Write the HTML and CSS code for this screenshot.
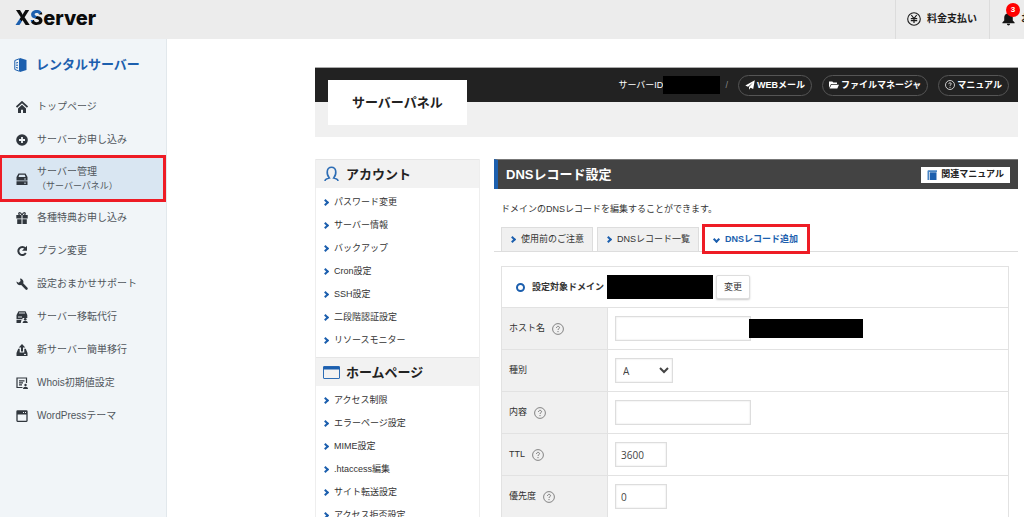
FILE: index.html
```html
<!DOCTYPE html>
<html lang="ja">
<head>
<meta charset="utf-8">
<title>サーバーパネル - DNSレコード設定</title>
<link rel="stylesheet" href="styles.css">
</head>
<body>
<svg class="sprite" aria-hidden="true">
  <symbol id="help" viewBox="0 0 12 12"><circle cx="6" cy="6" r="5.4" fill="none" stroke="currentColor" stroke-width=".9"/><path d="M4.5 4.9c0-2 3-2 3-.2C7.500 5.800 6 5.700 6 7" fill="none" stroke="currentColor" stroke-width="1"/><circle cx="6" cy="8.600" r=".65" fill="currentColor"/></symbol>
</svg>
<header class="topbar">
  <a class="logo" href="#" aria-label="XServer"><span class="logo-x">X</span><span class="logo-s">S</span>erver</a>
  <nav class="topnav">
    <a class="topnav-item" href="#">
      <svg class="icon-yen" viewBox="0 0 14 14" fill="none" stroke="#1c1c1c"><circle cx="7" cy="7" r="6.300" stroke-width="1.100"/><path d="M4.300 3L7 6.500 9.700 3M3.800 6.700h6.400M3.800 8.700h6.400M7 6.500V11" stroke-width="1.200"/></svg>
      料金支払い
    </a>
    <a class="topnav-item notice" href="#">
      <span class="bell"><svg viewBox="0 0 14 14" fill="#151515"><path d="M7 0c.8 0 1.200.5 1.200 1.200C10.600 1.700 11.600 3.500 11.600 5.500v3l2 2.200v.8H.4v-.8l2-2.200v-3c0-2 1-3.800 3.400-4.300C5.800.5 6.200 0 7 0zM5.300 12.200h3.400c0 2.300-3.400 2.300-3.400 0z"/></svg><span class="badge">3</span></span>
      お知らせ
    </a>
  </nav>
</header>
<div class="shell">
  <aside class="sidebar">
    <h2 class="side-title"><svg viewBox="0 0 13 14"><path d="M6 0l6.500 2v10L6 14z" fill="#1c5fae"/><path d="M5.500.7L.8 2.500v9l4.700 1.800zM2 5l2-.5M2 7.200h2M2 9.500l2 .5" fill="none" stroke="#1c5fae"/></svg>レンタルサーバー</h2>
    <ul class="side-list">
      <li><a href="#"><svg viewBox="0 0 12 12"><path d="M.5 6L6 1l5.500 5" fill="none" stroke="currentColor" stroke-width="1.700"/><path d="M6 3.800l4 3.600V12H7V8.700H5V12H2V7.400z"/></svg><span>トップページ</span></a></li>
      <li><a href="#"><svg viewBox="0 0 12 12"><circle cx="6" cy="6" r="5.800"/><path d="M6 3v6M3 6h6" stroke="#f1f5f8" stroke-width="1.800"/></svg><span>サーバーお申し込み</span></a></li>
      <li class="current"><a href="#"><svg viewBox="0 0 12 12"><path d="M2.500.5h7L11.500 4v3.500H.5V4zM.5 8.300h11V12H.5z"/><path d="M3.300 1.700h5.400l.8 2.300h-7z" fill="#d9e6f2"/><path d="M8 6h2M8 10.200h2" stroke="#d9e6f2" stroke-width=".8"/></svg><span>サーバー管理<small>（サーバーパネル）</small></span></a></li>
      <li><a href="#"><svg viewBox="0 0 12 12"><path d="M.3 3h5.200v3.500H.3zM6.500 3h5.200v3.500H6.500zM1.200 7.200h4.300V12H1.200zM6.500 7.200h4.300V12H6.500z"/><path d="M6 3C4-1 1.500 1 3.500 3M6 3c2-4 4.500-2 2.500 0" fill="none" stroke="currentColor" stroke-width="1.300"/></svg><span>各種特典お申し込み</span></a></li>
      <li><a href="#"><svg viewBox="0 0 12 12"><path d="M9.300 3.300A4 4 0 1 0 9.800 8" fill="none" stroke="currentColor" stroke-width="2"/><path d="M11 .8v5H6z"/></svg><span>プラン変更</span></a></li>
      <li><a href="#"><svg viewBox="0 0 12 12"><path d="M4 .4c2.800.2 4 2.600 3.200 4.800l4.300 4.600c1 1.300-.8 2.800-1.900 1.700L5.200 7C3 7.600.6 6.300.4 3.500l2.300 1.300 1.900-1.700z"/></svg><span>設定おまかせサポート</span></a></li>
      <li><a href="#"><svg viewBox="0 0 12 12"><path d="M2.500.3h7L11.300 4v3H6.500v1.200h-6V4zM.5 9h5l-.8 3H.5z"/><path d="M3 2h6M2 6h4" stroke="#f1f5f8" stroke-width=".9"/><circle cx="9.200" cy="8.300" r="1.300"/><path d="M6.600 12c0-2.900 5.200-2.900 5.200 0z"/></svg><span>サーバー移転代行</span></a></li>
      <li><a href="#"><svg viewBox="0 0 12 12"><path d="M6 0l3.300 3.500H7v4H5v-4H2.700zM2.200 4.800h1.500V8.600h4.600V4.800h1.500L11.500 9v3H.5V9z"/><path d="M8 10.400h2" stroke="#f1f5f8"/></svg><span>新サーバー簡単移行</span></a></li>
      <li><a href="#"><svg viewBox="0 0 12 12"><path d="M6.500 10.500H1V1h9.500v5M3 3.800h5.500M3 5.800h4M3 7.800h3" fill="none" stroke="currentColor" stroke-width="1.200"/><circle cx="9.500" cy="8" r="1.200"/><path d="M7 12c0-3 5-3 5 0z"/></svg><span>Whois初期値設定</span></a></li>
      <li><a href="#"><svg viewBox="0 0 12 12"><rect x="1" y="1" width="10" height="10.300" rx=".5" fill="none" stroke="currentColor" stroke-width="1.300"/><path d="M1 1h10v3.500H1z"/><path d="M7 2.500h1M9 2.500h1" stroke="#f1f5f8"/></svg><span>WordPressテーマ</span></a></li>
    </ul>
  </aside>
  <main class="main">
    <div class="panel-head">
      <div class="panel-bar">
        <span class="server-id">サーバーID<span class="mask mask-id"></span></span>
        <span class="slash">/</span>
        <a class="pill" href="#"><svg viewBox="0 0 10 10" fill="#fff"><path d="M9.800.2L8.200 9 5.500 7.800 4 9.800V7L8 2.500 3 6.700.3 5.500z"/></svg>WEBメール</a>
        <a class="pill" href="#"><svg viewBox="0 0 10 10" fill="#fff"><path d="M0 8V1.500h3.300l1 1H8V4H2zM2.400 4.800H10L8.300 8.600H.6z"/></svg>ファイルマネージャ</a>
        <a class="pill" href="#"><svg viewBox="0 0 12 12"><use href="#help"/></svg>マニュアル</a>
      </div>
      <h1 class="panel-title">サーバーパネル</h1>
    </div>
    <div class="columns">
      <nav class="menu">
        <h2><svg viewBox="0 0 16 16" fill="none" stroke="#2d6db5" stroke-width="1.600"><path d="M1.500 15c0-1.800 1.500-2.300 4.300-3C2.500 8 3 1.300 8 1.300s5.500 6.700 2.200 10.700c2.800.7 4.300 1.200 4.300 3"/></svg>アカウント</h2>
        <ul>
          <li><a href="#">パスワード変更</a></li>
          <li><a href="#">サーバー情報</a></li>
          <li><a href="#">バックアップ</a></li>
          <li><a href="#">Cron設定</a></li>
          <li><a href="#">SSH設定</a></li>
          <li><a href="#">二段階認証設定</a></li>
          <li><a href="#">リソースモニター</a></li>
        </ul>
        <h2><svg viewBox="0 0 17 16" fill="none" stroke="#2d6db5"><rect x=".5" y="2.500" width="16" height="12" rx=".5"/><path d="M.5 4h16" stroke="#1c5fae" stroke-width="3"/></svg>ホームページ</h2>
        <ul>
          <li><a href="#">アクセス制限</a></li>
          <li><a href="#">エラーページ設定</a></li>
          <li><a href="#">MIME設定</a></li>
          <li><a href="#">.htaccess編集</a></li>
          <li><a href="#">サイト転送設定</a></li>
          <li><a href="#">アクセス拒否設定</a></li>
        </ul>
      </nav>
      <section class="content">
        <div class="content-head">
          <h2>DNSレコード設定</h2>
          <a class="manual" href="#"><svg viewBox="0 0 10 10"><path d="M1 .3h9V2H2v8H.5V1z" fill="#4a86c5"/><path d="M2.700 2.300H9.500V10H2.700z" fill="#1c5fae"/></svg>関連マニュアル</a>
        </div>
        <p class="lead">ドメインのDNSレコードを編集することができます。</p>
        <div class="tabs">
          <a class="tab" href="#">使用前のご注意</a>
          <a class="tab" href="#">DNSレコード一覧</a>
          <a class="tab selected" href="#">DNSレコード追加</a>
        </div>
        <form class="record">
          <table>
            <colgroup><col class="col-label"><col></colgroup>
            <tbody>
              <tr><td colspan="2" class="domain"><div class="domain-row"><span class="ring"></span><b>設定対象ドメイン</b><span class="mask mask-domain"></span><button type="button">変更</button></div></td></tr>
              <tr><th scope="row"><div class="label"><label for="host">ホスト名</label><svg><use href="#help"/></svg></div></th><td><div class="field"><input id="host" class="wide" type="text"><span class="mask mask-host"></span></div></td></tr>
              <tr><th scope="row"><div class="label"><label for="kind">種別</label></div></th><td><div class="field"><select id="kind"><option>A</option></select></div></td></tr>
              <tr><th scope="row"><div class="label"><label for="value">内容</label><svg><use href="#help"/></svg></div></th><td><div class="field"><input id="value" class="wide" type="text"></div></td></tr>
              <tr><th scope="row"><div class="label"><label for="ttl">TTL</label><svg><use href="#help"/></svg></div></th><td><div class="field"><input id="ttl" type="text" value="3600"></div></td></tr>
              <tr><th scope="row"><div class="label"><label for="priority">優先度</label><svg><use href="#help"/></svg></div></th><td><div class="field"><input id="priority" type="text" value="0"></div></td></tr>
            </tbody>
          </table>
        </form>
      </section>
    </div>
  </main>
</div>
</body>
</html>
```

FILE: styles.css
```css
*, *::before { box-sizing: border-box; }
body {
  margin: 0;
  height: 100vh;
  overflow: hidden;
  display: flex;
  flex-direction: column;
  background: #fff;
  color: #333;
  font: 9px/15px "Liberation Sans", "Noto Sans CJK JP", sans-serif;
}
a { color: inherit; text-decoration: none; }
ul { list-style: none; margin: 0; padding: 0; }
h1, h2, p { margin: 0; }
svg { flex: none; }
.sprite { position: absolute; width: 0; height: 0; }

.topbar {
  flex: none;
  display: flex;
  justify-content: space-between;
  height: 39px;
  overflow: hidden;
  background: #ececec;
}
.logo {
  padding-left: 15px;
  font: 800 20px/37px Inter, sans-serif;
  color: #0c0c0c;
}
.logo-x { background: linear-gradient(45deg, #1c5fae 40%, #0c0c0c 40%); background-clip: text; color: transparent; }
.logo-s { background: linear-gradient(135deg, #1c5fae 48%, #0c0c0c 48%); background-clip: text; color: transparent; }
.topnav { display: flex; width: 129px; color: #1c1c1c; font-size: 10px; font-weight: bold; }
.topnav-item {
  flex: none;
  display: flex;
  align-items: center;
  gap: 6px;
  padding: 0 12px 2px 11px;
  border-left: 1px solid #dcdcdc;
}
.notice { padding-left: 12px; }
.icon-yen { width: 14px; height: 14px; }
.bell { position: relative; display: flex; }
.bell svg { width: 13px; height: 14px; }
.badge {
  position: absolute;
  top: -9px;
  left: 4px;
  width: 14px;
  height: 14px;
  border-radius: 50%;
  background: #f00;
  color: #fff;
  font-size: 8px;
  line-height: 14px;
  text-align: center;
}

.shell { flex: 1; min-height: 0; display: flex; }
.sidebar {
  flex: none;
  width: 167px;
  background: #f1f5f8;
  border-right: 1px solid #e2e8ec;
}
.side-title {
  display: flex;
  align-items: center;
  gap: 9px;
  height: 51px;
  padding-left: 14px;
  color: #1c5fae;
  font-size: 13px;
}
.side-title svg { width: 13px; height: 14px; }
.side-list { color: #50565c; font-size: 10px; line-height: 14px; }
.side-list a { display: flex; align-items: center; gap: 9px; height: 33px; padding-left: 16px; }
.side-list svg { width: 12px; height: 12px; color: #30363d; fill: currentColor; }
.side-list small { display: block; font-size: 9px; }
.side-list .current a {
  height: 45px;
  margin-right: 1px;
  background: #d9e6f2;
  outline: 3px solid #ee1c25;
  outline-offset: -2px;
}

.main { flex: 1; min-width: 0; padding: 28px 6px 0 148px; }
.panel-head { position: relative; height: 70px; background: #f0f0f0; }
.panel-bar {
  display: flex;
  align-items: center;
  height: 35px;
  padding-right: 9px;
  justify-content: flex-end;
  gap: 10px;
  background: #222;
  border-top: 1px solid #aaa;
  color: #fff;
  font-weight: bold;
}
.server-id { display: flex; align-items: center; font-weight: normal; }
.slash { margin: 0 -5px; padding-right: 5px; color: #888; font-weight: normal; }
.mask { flex: none; background: #000; }
.mask-id { width: 57px; height: 18px; }
.mask-domain { width: 106px; height: 24px; margin: 0 3px; }
.mask-host { width: 114px; height: 19px; margin-left: -2px; }
.pill {
  display: flex;
  align-items: center;
  gap: 2px;
  height: 21px;
  padding: 0 6px;
  border: 1px solid #555;
  border-radius: 11px;
}
.pill svg { width: 10px; height: 10px; }
.panel-title {
  position: absolute;
  top: 13px;
  left: 13px;
  padding: 0 24px;
  background: #fff;
  color: #222;
  font-size: 13px;
  line-height: 45px;
}

.columns { display: grid; grid-template-columns: 165px 1fr; gap: 14px; margin-top: 22px; }
.menu { border: solid #eee; border-width: 0 1px; }
.menu h2 {
  display: flex;
  align-items: center;
  gap: 6px;
  height: 29px;
  padding-left: 7px;
  background: #f2f2f2;
  border-top: 1px solid #e6e6e6;
  color: #222;
  font-size: 13px;
}
.menu h2 svg { width: 17px; height: 16px; }
.menu ul { padding: 3px 0 5px 7px; }
.menu li a, .tab { display: flex; align-items: center; gap: 6px; }
.menu li a { height: 23px; }
.menu li a::before, .tab::before {
  content: "";
  width: 5px;
  height: 5px;
  border: solid #1c5fae;
  border-width: 2px 2px 0 0;
  transform: rotate(45deg);
}

.content-head {
  display: flex;
  align-items: center;
  justify-content: space-between;
  height: 30px;
  padding: 0 8px;
  border-left: 4px solid #1c5fae;
  border-top: 1px solid #777;
  background: #434343;
  color: #fff;
}
.content-head h2 { font-size: 13px; }
.manual {
  display: flex;
  align-items: center;
  gap: 4px;
  height: 16px;
  padding: 0 6px;
  background: #fff;
  color: #222;
  font-weight: bold;
}
.manual svg { width: 10px; height: 10px; }
.lead { padding: 13px 7px 10px; }
.tabs { display: flex; gap: 4px; padding-left: 7px; border-bottom: 1px solid #ddd; }
.tab {
  height: 24px;
  padding: 0 8px;
  background: #f0f0f0;
  border: 1px solid #ddd;
  border-bottom: 0;
}
.tab.selected {
  margin-left: 2px;
  background: #fff;
  border-color: #fff;
  color: #1c5fae;
  font-weight: bold;
  outline: 3px solid #ee1c25;
}
.tab.selected::before { transform: rotate(135deg); }

.record { padding: 14px 9px 0 7px; }
.record table { width: 100%; border-collapse: collapse; table-layout: fixed; }
.col-label { width: 106px; }
.record td, .record th { height: 42px; padding: 0 7px; border: 1px solid #e2e2e2; text-align: left; font-weight: normal; }
.record th { background: #f0f0f0; }
.record .domain { height: 41px; padding-left: 14px; }
.domain-row, .field { display: flex; align-items: center; }
.ring { width: 9px; height: 9px; margin-right: 7px; border: 2px solid #1c5fae; border-radius: 50%; }
.domain-row button {
  height: 24px;
  padding: 0 7px;
  border: 1px solid #ddd;
  border-radius: 2px;
  background: #fff;
  box-shadow: 0 1px 2px #ccc;
  color: #333;
  font: inherit;
}
.label { display: flex; align-items: center; gap: 7px; }
.label svg { width: 12px; height: 12px; color: #777; }
.field input, .field select {
  width: 52px;
  height: 25px;
  margin: 0;
  padding: 0 5px;
  border: 1px solid #ddd;
  border-radius: 0;
  background: #fff;
  box-shadow: inset 0 0 2px #ddd;
  color: #444;
  font: 10px/15px "Open Sans", sans-serif;
}
.field .wide { width: 136px; }
.field select { width: 58px; padding: 0 0 0 3px; }
```
